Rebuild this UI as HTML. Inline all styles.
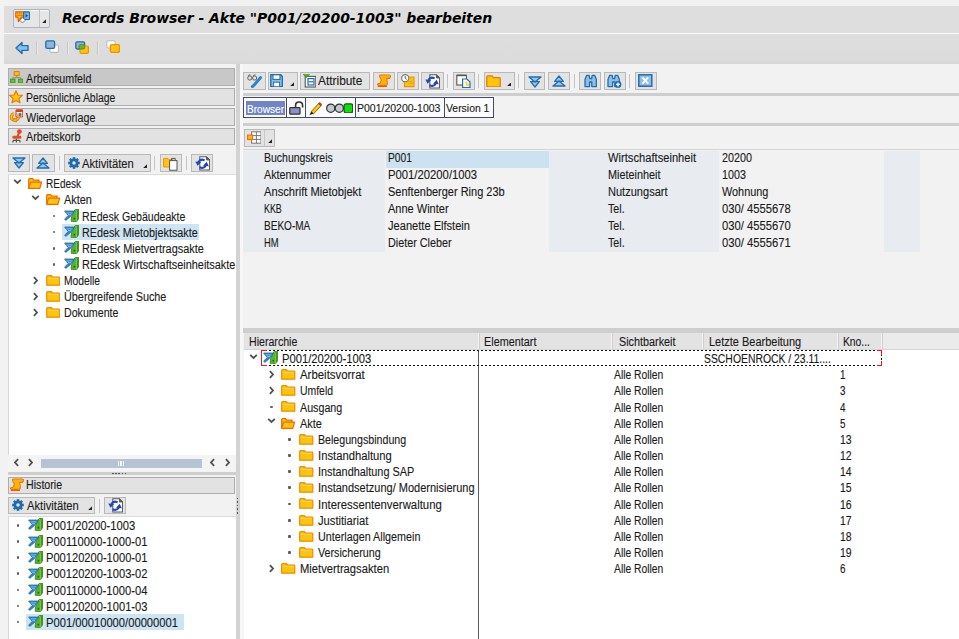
<!DOCTYPE html>
<html lang="de"><head><meta charset="utf-8"><title>Records Browser</title>
<style>
html,body{margin:0;padding:0}
body{width:959px;height:639px;overflow:hidden;background:#f2f2f2;position:relative;font-family:"Liberation Sans", sans-serif;font-size:12px;color:#1a1a1a}
#r{position:absolute;left:0;top:0;width:959px;height:639px;overflow:hidden}
#r div{position:absolute;white-space:nowrap}
#r .b{background:#e3e3e3;border:1px solid #b9b9b9;box-sizing:border-box}
#r .t{transform-origin:0 50%;-webkit-text-stroke:0.12px}
#r .i{line-height:0}
#r .i svg{display:block}
#r .title{font-family:"DejaVu Sans","Liberation Sans",sans-serif;font-weight:bold;font-style:italic;font-size:14px;color:#000;letter-spacing:-0.06px}
</style></head>
<body><div id="r">
<div style="left:4px;top:6px;width:955px;height:27px;background:#dedede"></div>
<div style="left:4px;top:33px;width:955px;height:1px;background:#fbfbfb"></div>
<div style="left:4px;top:34px;width:955px;height:30px;background:linear-gradient(#dedede 0,#dcdcdc 80%,#d6d6d6 100%)"></div>
<div style="left:13.4px;top:9.2px;width:36.2px;height:18.6px;background:#e6e6e6;border:1px solid #a9b4c4;border-radius:2px;box-sizing:border-box;box-shadow:inset 0 1px 0 #fafafa"></div>
<div style="left:39px;top:10.4px;width:1px;height:16.2px;background:#c4c4c4"></div>
<div class="i" style="left:15px;top:11.4px"><svg width="15.4" height="12.6" viewBox="0 0 15.4 12.6" style=""><path d="M0.8 0.8 H9.4 V6.2 H6.4 L3.4 10.6 L3 6.2 H0.8 Z" fill="#ffc40c" stroke="#ee5a00" stroke-width="1.2" stroke-linejoin="round"/><path d="M2.6 1.6 V3.4 M4.6 1.6 V3.4 M6.6 1.6 V3.4 M2 4.4 H8" stroke="#ee6a00" stroke-width="0.9"/><rect x="8.6" y="0.9" width="6" height="7.6" rx="1" fill="#7fb4e0" stroke="#1f6fb0" stroke-width="1.2"/><path d="M10.6 2.8 L13 4.7 L10.6 6.6 Z" fill="#1650a0"/><rect x="5.6" y="7.4" width="3.8" height="3.8" fill="#fff" stroke="#777" stroke-width="0.9" transform="rotate(45 7.5 9.3)"/></svg></div>
<div class="i" style="left:42.2px;top:19.2px"><svg width="4.2" height="4.2" viewBox="0 0 4.2 4.2" style=""><path d="M4.2 0 V4.2 H0 Z" fill="#222"/></svg></div>
<div class="title" style="left:62px;top:6px;height:24px;line-height:24px">Records Browser - Akte "P001/20200-1003" bearbeiten</div>
<div class="i" style="left:15px;top:41px"><svg width="14" height="14" viewBox="0 0 14 14" style=""><path d="M1 7 L7 1.4 V4.6 H13 V9.4 H7 V12.6 Z" fill="#8fbfe6" stroke="#1f6fb0" stroke-width="1.4" stroke-linejoin="round"/></svg></div>
<div style="left:36px;top:41px;width:1px;height:14px;background:#c6c6c6"></div>
<div style="left:37px;top:41px;width:1px;height:14px;background:#e9e9e9"></div>
<div class="i" style="left:45px;top:40px"><svg width="14" height="13" viewBox="0 0 14 13" style=""><rect x="5" y="5" width="8.4" height="7.4" rx="1.4" fill="#fff" stroke="#bbb" stroke-width="1.1"/><rect x="0.8" y="0.8" width="8.8" height="7.6" rx="1.4" fill="#8fb4de" stroke="#1f6fb0" stroke-width="1.3"/></svg></div>
<div style="left:67px;top:41px;width:1px;height:14px;background:#c6c6c6"></div>
<div style="left:68px;top:41px;width:1px;height:14px;background:#e9e9e9"></div>
<div class="i" style="left:75px;top:41px"><svg width="14" height="13" viewBox="0 0 14 13" style=""><rect x="0.8" y="0.8" width="8.8" height="7.2" rx="1.4" fill="#8fb4de" stroke="#1f6fb0" stroke-width="1.3"/><rect x="5" y="5" width="8.4" height="7.4" rx="1.4" fill="#ffc40c" stroke="#f29100" stroke-width="1.2"/><rect x="4" y="3.8" width="5.6" height="4.2" rx="0.8" fill="#6fb52c" stroke="#3f8f1a" stroke-width="0.9"/></svg></div>
<div style="left:97px;top:41px;width:1px;height:14px;background:#c6c6c6"></div>
<div style="left:98px;top:41px;width:1px;height:14px;background:#e9e9e9"></div>
<div class="i" style="left:106px;top:40px"><svg width="14" height="13" viewBox="0 0 14 13" style=""><rect x="0.8" y="0.8" width="8.4" height="7.2" rx="1.4" fill="#fff" stroke="#bbb" stroke-width="1.1"/><rect x="4.4" y="4.6" width="9" height="7.8" rx="1.4" fill="#ffc40c" stroke="#f29100" stroke-width="1.3"/></svg></div>
<div style="left:236px;top:63.5px;width:3.9px;height:576px;background:#d3d3d3"></div>
<div style="left:239.9px;top:64px;width:3.3px;height:575px;background:#f7f7f7"></div>
<div style="left:8px;top:68px;width:226.5px;height:17.5px;background:#c8c8c8;border:1px solid #adadad;box-sizing:border-box"></div>
<div class="i" style="left:10px;top:71px"><svg width="13.4" height="12.4" viewBox="0 0 14 13" style=""><rect x="4.4" y="0.6" width="5.2" height="4" fill="#ffc40c" stroke="#ee7a00" stroke-width="1.1"/><path d="M7 4.6 V7 M2.8 9 V7 H11.2 V9" fill="none" stroke="#888" stroke-width="1"/><rect x="0.6" y="8.6" width="4.6" height="3.8" fill="#6fc02c" stroke="#3f9f1a" stroke-width="1.1"/><rect x="8.8" y="8.6" width="4.6" height="3.8" fill="#6fc02c" stroke="#3f9f1a" stroke-width="1.1"/></svg></div>
<div class="t" style="left:25.5px;top:71.0px;height:17.5px;line-height:17.5px;transform:scaleX(0.8913);">Arbeitsumfeld</div>
<div style="left:8px;top:88px;width:226.5px;height:17.5px;background:#e2e2e2;border:1px solid #adadad;box-sizing:border-box"></div>
<div class="i" style="left:9px;top:90px"><svg width="14" height="14" viewBox="0 0 14 14" style=""><path d="M7 0.8 L8.9 5 L13.4 5.4 L10 8.4 L11 12.8 L7 10.4 L3 12.8 L4 8.4 L0.6 5.4 L5.1 5 Z" fill="#ffc40c" stroke="#ee7a00" stroke-width="1.2" stroke-linejoin="round"/></svg></div>
<div class="t" style="left:25.5px;top:89.5px;height:17.5px;line-height:17.5px;transform:scaleX(0.8701);">Persönliche Ablage</div>
<div style="left:8px;top:108px;width:226.5px;height:17.5px;background:#e2e2e2;border:1px solid #adadad;box-sizing:border-box"></div>
<div class="i" style="left:8.6px;top:109.4px"><svg width="14.4" height="13.6" viewBox="0 0 14.4 13.6" style=""><path d="M9.4 8.4 Q8.6 11.4 5.4 11.2 Q2 10.8 2.4 7.6 Q2.8 5.4 5 4.6" fill="none" stroke="#e07800" stroke-width="3.2"/><path d="M9.4 8.4 Q8.6 11.4 5.4 11.2 Q2 10.8 2.4 7.6 Q2.8 5.4 5 4.6" fill="none" stroke="#ffc40c" stroke-width="1.6"/><path d="M3 11.4 L7.4 13 L7 9.2 Z" fill="#ffc40c" stroke="#e07800" stroke-width="0.8"/><rect x="7" y="0.8" width="6.8" height="7.2" rx="1" fill="#fff" stroke="#d8401a" stroke-width="1.1"/><rect x="7" y="0.8" width="6.8" height="2.2" fill="#d8401a"/><path d="M9 4.2 V7 M10.6 4.2 H12 V7 H10.6 Z M10.6 5.6 H12" stroke="#444" stroke-width="0.8" fill="none"/></svg></div>
<div class="t" style="left:25.5px;top:109.5px;height:17.5px;line-height:17.5px;transform:scaleX(0.8969);">Wiedervorlage</div>
<div style="left:8px;top:127.5px;width:226.5px;height:17.5px;background:#e2e2e2;border:1px solid #adadad;box-sizing:border-box"></div>
<div class="i" style="left:9.6px;top:129.1px"><svg width="12.4" height="14" viewBox="0 0 12.4 14" style=""><circle cx="9.4" cy="2.6" r="2.4" fill="#e4481c"/><path d="M8.8 4.4 L7.6 7.4" stroke="#e4481c" stroke-width="2"/><rect x="2.4" y="6.8" width="9" height="3" rx="1.2" fill="#e0501a"/><path d="M6.4 9.8 V11.6 M3 13.6 V12.2 Q3 11.4 4 11.4 H9 Q10 11.4 10 12.2 V13.6 M6.4 11.6 V13.6" fill="none" stroke="#555" stroke-width="1.2"/></svg></div>
<div class="t" style="left:25.5px;top:129.0px;height:17.5px;line-height:17.5px;transform:scaleX(0.8962);">Arbeitskorb</div>
<div class="b" style="left:8.4px;top:154px;width:22px;height:18px;"></div>
<div class="i" style="left:12.4px;top:157.2px"><svg width="14" height="12" viewBox="0 0 14 12" style=""><path d="M2.6 5.6 H11.4 L7 11 Z" fill="#9cc4e6" stroke="#1f6fb0" stroke-width="1.3" stroke-linejoin="round"/><path d="M1 1 H13 L7 6 Z" fill="#9cc4e6" stroke="#1f6fb0" stroke-width="1.3" stroke-linejoin="round"/></svg></div>
<div class="b" style="left:32.4px;top:154px;width:22.2px;height:18px;"></div>
<div class="i" style="left:36.4px;top:157.2px"><svg width="14" height="12" viewBox="0 0 14 12" style=""><path d="M2.6 6.4 H11.4 L7 1 Z" fill="#9cc4e6" stroke="#1f6fb0" stroke-width="1.3" stroke-linejoin="round"/><path d="M1 11 H13 L7 6 Z" fill="#9cc4e6" stroke="#1f6fb0" stroke-width="1.3" stroke-linejoin="round"/></svg></div>
<div style="left:58.5px;top:156px;width:1px;height:14px;background:#c4c4c4"></div>
<div class="b" style="left:64px;top:154px;width:87px;height:18px;"></div>
<div class="i" style="left:67.6px;top:157px"><svg width="12" height="12" viewBox="0 0 13 13" style=""><rect x="5.1" y="0.2" width="2.8" height="3" fill="#1c6cb2" transform="rotate(0 6.5 6.5)"/><rect x="5.1" y="0.2" width="2.8" height="3" fill="#1c6cb2" transform="rotate(45 6.5 6.5)"/><rect x="5.1" y="0.2" width="2.8" height="3" fill="#1c6cb2" transform="rotate(90 6.5 6.5)"/><rect x="5.1" y="0.2" width="2.8" height="3" fill="#1c6cb2" transform="rotate(135 6.5 6.5)"/><rect x="5.1" y="0.2" width="2.8" height="3" fill="#1c6cb2" transform="rotate(180 6.5 6.5)"/><rect x="5.1" y="0.2" width="2.8" height="3" fill="#1c6cb2" transform="rotate(225 6.5 6.5)"/><rect x="5.1" y="0.2" width="2.8" height="3" fill="#1c6cb2" transform="rotate(270 6.5 6.5)"/><rect x="5.1" y="0.2" width="2.8" height="3" fill="#1c6cb2" transform="rotate(315 6.5 6.5)"/><circle cx="6.5" cy="6.5" r="4.8" fill="#1c6cb2"/><circle cx="6.5" cy="6.5" r="1.9" fill="#e8e8e8"/></svg></div>
<div class="t" style="left:82px;top:155.0px;height:18px;line-height:18px;transform:scaleX(0.9348);">Aktivitäten</div>
<div class="i" style="left:143.3px;top:164.2px"><svg width="4.2" height="4.2" viewBox="0 0 4.2 4.2" style=""><path d="M4.2 0 V4.2 H0 Z" fill="#222"/></svg></div>
<div style="left:154px;top:156px;width:1px;height:14px;background:#c4c4c4"></div>
<div class="b" style="left:160px;top:154px;width:21.5px;height:18px;"></div>
<div class="i" style="left:163px;top:155.5px"><svg width="15" height="15" viewBox="0 0 15 15" style=""><path d="M0.6 2.4 H5 L6 3.6 H10 V11 H0.6 Z" fill="#ffc40c" stroke="#f29100" stroke-width="1"/><rect x="6.6" y="4.6" width="7.4" height="9.6" fill="#fff" stroke="#555" stroke-width="1"/><path d="M8.4 4.4 V2.4 H12.2 V4.4" fill="none" stroke="#555" stroke-width="1"/></svg></div>
<div style="left:186px;top:156px;width:1px;height:14px;background:#c4c4c4"></div>
<div class="b" style="left:191px;top:154px;width:22px;height:18px;"></div>
<div class="i" style="left:194.5px;top:155.5px"><svg width="15.4" height="15" viewBox="0 0 15.4 15" style=""><path d="M4.8 0.8 H11.4 L14.6 4 V14 H4.8 Z" fill="#fff" stroke="#5a5a5a" stroke-width="1.1"/><path d="M11.4 0.8 V4 H14.6 Z" fill="#555" stroke="#555" stroke-width="0.8"/><path d="M9.6 4.4 Q5.4 2.4 3.4 6.2" fill="none" stroke="#1d46c0" stroke-width="2.1"/><path d="M0.4 5.4 L6.2 5.9 L2.5 9.8 Z" fill="#1d46c0"/><path d="M4.6 11.2 Q8.8 13.2 10.8 9.4" fill="none" stroke="#1d46c0" stroke-width="2.1"/><path d="M13.8 10.2 L8 9.7 L11.7 5.8 Z" fill="#1d46c0"/></svg></div>
<div style="left:8px;top:174px;width:228px;height:281px;background:#fff;border-left:1px solid #d8d8d8;border-top:1px solid #dcdcdc;box-sizing:border-box"></div>
<div class="i" style="left:13.100000000000001px;top:178.79999999999998px"><svg width="9" height="6" viewBox="0 0 9 6" style=""><path d="M1.2 0.9 L4.5 4 L7.8 0.9" fill="none" stroke="#505050" stroke-width="1.8"/></svg></div>
<div class="i" style="left:27.6px;top:178.0px"><svg width="14.5" height="11" viewBox="0 0 14.5 11" style=""><path d="M0.7 10.2 V1.5 Q0.7 0.7 1.5 0.7 H4.6 L5.8 2.2 H11 V4" fill="#ffc40c" stroke="#ee6a00" stroke-width="1.2"/><path d="M0.7 10.4 L2.6 4.1 H13.6 L11.8 10.4 Z" fill="#ffc40c" stroke="#ee6a00" stroke-width="1.2" stroke-linejoin="round"/></svg></div>
<div class="t" style="left:45.900000000000006px;top:176.2px;height:16.15px;line-height:16.15px;transform:scaleX(0.8348);">REdesk</div>
<div class="i" style="left:31.299999999999997px;top:194.95px"><svg width="9" height="6" viewBox="0 0 9 6" style=""><path d="M1.2 0.9 L4.5 4 L7.8 0.9" fill="none" stroke="#505050" stroke-width="1.8"/></svg></div>
<div class="i" style="left:45.8px;top:194.15px"><svg width="14.5" height="11" viewBox="0 0 14.5 11" style=""><path d="M0.7 10.2 V1.5 Q0.7 0.7 1.5 0.7 H4.6 L5.8 2.2 H11 V4" fill="#ffc40c" stroke="#ee6a00" stroke-width="1.2"/><path d="M0.7 10.4 L2.6 4.1 H13.6 L11.8 10.4 Z" fill="#ffc40c" stroke="#ee6a00" stroke-width="1.2" stroke-linejoin="round"/></svg></div>
<div class="t" style="left:64.1px;top:192.35px;height:16.15px;line-height:16.15px;transform:scaleX(0.9107);">Akten</div>
<div style="left:52.6px;top:214.5px;width:2.8px;height:2.8px;background:#606060;border-radius:0.9px"></div>
<div class="i" style="left:63.6px;top:208.8px"><svg width="15" height="13" viewBox="0 0 15 13" style=""><path d="M7.1 12.3 L7.6 7.6 L10.9 0.8 L14.5 0.2 L14.5 9.8 L12.6 12.5 Z" fill="#58b42c" stroke="#3a8c1c" stroke-width="0.9" stroke-linejoin="round"/><path d="M12.6 12.5 L12.6 2.6 L14.5 0.2 L14.5 9.8 Z" fill="#3a9420"/><path d="M10.9 0.8 L12.6 2.6 L12.6 12.5" fill="none" stroke="#8ed860" stroke-width="0.7"/><rect x="9.6" y="8.8" width="1.5" height="1.7" fill="#1f5d12"/><path d="M0.6 2 H10.6 L6.4 7.6 L1.8 11.4 L0.6 10.2 L4.2 6.4 Z" fill="#2f83c2" stroke="#1f6fb0" stroke-width="0.8" stroke-linejoin="round"/><path d="M2.6 3.9 H8.4 M4 5.7 H7" stroke="#9fd0f0" stroke-width="0.8"/></svg></div>
<div class="t" style="left:82.3px;top:208.5px;height:16.15px;line-height:16.15px;transform:scaleX(0.8808);">REdesk Gebäudeakte</div>
<div style="left:62.0px;top:224.04999999999998px;width:137px;height:15.549999999999999px;background:#cde4f3"></div>
<div style="left:52.6px;top:230.64999999999998px;width:2.8px;height:2.8px;background:#606060;border-radius:0.9px"></div>
<div class="i" style="left:63.6px;top:224.95px"><svg width="15" height="13" viewBox="0 0 15 13" style=""><path d="M7.1 12.3 L7.6 7.6 L10.9 0.8 L14.5 0.2 L14.5 9.8 L12.6 12.5 Z" fill="#58b42c" stroke="#3a8c1c" stroke-width="0.9" stroke-linejoin="round"/><path d="M12.6 12.5 L12.6 2.6 L14.5 0.2 L14.5 9.8 Z" fill="#3a9420"/><path d="M10.9 0.8 L12.6 2.6 L12.6 12.5" fill="none" stroke="#8ed860" stroke-width="0.7"/><rect x="9.6" y="8.8" width="1.5" height="1.7" fill="#1f5d12"/><path d="M0.6 2 H10.6 L6.4 7.6 L1.8 11.4 L0.6 10.2 L4.2 6.4 Z" fill="#2f83c2" stroke="#1f6fb0" stroke-width="0.8" stroke-linejoin="round"/><path d="M2.6 3.9 H8.4 M4 5.7 H7" stroke="#9fd0f0" stroke-width="0.8"/></svg></div>
<div class="t" style="left:82.3px;top:224.65px;height:16.15px;line-height:16.15px;transform:scaleX(0.8985);">REdesk Mietobjektsakte</div>
<div style="left:52.6px;top:246.79999999999998px;width:2.8px;height:2.8px;background:#606060;border-radius:0.9px"></div>
<div class="i" style="left:63.6px;top:241.1px"><svg width="15" height="13" viewBox="0 0 15 13" style=""><path d="M7.1 12.3 L7.6 7.6 L10.9 0.8 L14.5 0.2 L14.5 9.8 L12.6 12.5 Z" fill="#58b42c" stroke="#3a8c1c" stroke-width="0.9" stroke-linejoin="round"/><path d="M12.6 12.5 L12.6 2.6 L14.5 0.2 L14.5 9.8 Z" fill="#3a9420"/><path d="M10.9 0.8 L12.6 2.6 L12.6 12.5" fill="none" stroke="#8ed860" stroke-width="0.7"/><rect x="9.6" y="8.8" width="1.5" height="1.7" fill="#1f5d12"/><path d="M0.6 2 H10.6 L6.4 7.6 L1.8 11.4 L0.6 10.2 L4.2 6.4 Z" fill="#2f83c2" stroke="#1f6fb0" stroke-width="0.8" stroke-linejoin="round"/><path d="M2.6 3.9 H8.4 M4 5.7 H7" stroke="#9fd0f0" stroke-width="0.8"/></svg></div>
<div class="t" style="left:82.3px;top:240.8px;height:16.15px;line-height:16.15px;transform:scaleX(0.9084);">REdesk Mietvertragsakte</div>
<div style="left:52.6px;top:262.95px;width:2.8px;height:2.8px;background:#606060;border-radius:0.9px"></div>
<div class="i" style="left:63.6px;top:257.25px"><svg width="15" height="13" viewBox="0 0 15 13" style=""><path d="M7.1 12.3 L7.6 7.6 L10.9 0.8 L14.5 0.2 L14.5 9.8 L12.6 12.5 Z" fill="#58b42c" stroke="#3a8c1c" stroke-width="0.9" stroke-linejoin="round"/><path d="M12.6 12.5 L12.6 2.6 L14.5 0.2 L14.5 9.8 Z" fill="#3a9420"/><path d="M10.9 0.8 L12.6 2.6 L12.6 12.5" fill="none" stroke="#8ed860" stroke-width="0.7"/><rect x="9.6" y="8.8" width="1.5" height="1.7" fill="#1f5d12"/><path d="M0.6 2 H10.6 L6.4 7.6 L1.8 11.4 L0.6 10.2 L4.2 6.4 Z" fill="#2f83c2" stroke="#1f6fb0" stroke-width="0.8" stroke-linejoin="round"/><path d="M2.6 3.9 H8.4 M4 5.7 H7" stroke="#9fd0f0" stroke-width="0.8"/></svg></div>
<div class="t" style="left:82.3px;top:256.95px;height:16.15px;line-height:16.15px;transform:scaleX(0.9092);">REdesk Wirtschaftseinheitsakte</div>
<div class="i" style="left:33.3px;top:275.49999999999994px"><svg width="6" height="9" viewBox="0 0 6 9" style=""><path d="M0.9 1.2 L4 4.5 L0.9 7.8" fill="none" stroke="#505050" stroke-width="1.8"/></svg></div>
<div class="i" style="left:45.8px;top:274.9px"><svg width="14.5" height="11" viewBox="0 0 14.5 11" style=""><path d="M0.7 1.8 Q0.7 0.7 1.8 0.7 H5.4 L6.6 2.2 H13 Q13.8 2.2 13.8 3 V10.2 H0.7 Z" fill="#ffc40c" stroke="#f08a00" stroke-width="1.2"/><path d="M1.6 3.3 H12.8" stroke="#ffdc5e" stroke-width="0.9"/></svg></div>
<div class="t" style="left:64.1px;top:273.1px;height:16.15px;line-height:16.15px;transform:scaleX(0.8591);">Modelle</div>
<div class="i" style="left:33.3px;top:291.65px"><svg width="6" height="9" viewBox="0 0 6 9" style=""><path d="M0.9 1.2 L4 4.5 L0.9 7.8" fill="none" stroke="#505050" stroke-width="1.8"/></svg></div>
<div class="i" style="left:45.8px;top:291.05px"><svg width="14.5" height="11" viewBox="0 0 14.5 11" style=""><path d="M0.7 1.8 Q0.7 0.7 1.8 0.7 H5.4 L6.6 2.2 H13 Q13.8 2.2 13.8 3 V10.2 H0.7 Z" fill="#ffc40c" stroke="#f08a00" stroke-width="1.2"/><path d="M1.6 3.3 H12.8" stroke="#ffdc5e" stroke-width="0.9"/></svg></div>
<div class="t" style="left:64.1px;top:289.25px;height:16.15px;line-height:16.15px;transform:scaleX(0.9029);">Übergreifende Suche</div>
<div class="i" style="left:33.3px;top:307.79999999999995px"><svg width="6" height="9" viewBox="0 0 6 9" style=""><path d="M0.9 1.2 L4 4.5 L0.9 7.8" fill="none" stroke="#505050" stroke-width="1.8"/></svg></div>
<div class="i" style="left:45.8px;top:307.2px"><svg width="14.5" height="11" viewBox="0 0 14.5 11" style=""><path d="M0.7 1.8 Q0.7 0.7 1.8 0.7 H5.4 L6.6 2.2 H13 Q13.8 2.2 13.8 3 V10.2 H0.7 Z" fill="#ffc40c" stroke="#f08a00" stroke-width="1.2"/><path d="M1.6 3.3 H12.8" stroke="#ffdc5e" stroke-width="0.9"/></svg></div>
<div class="t" style="left:64.1px;top:305.4px;height:16.15px;line-height:16.15px;transform:scaleX(0.8875);">Dokumente</div>
<div style="left:8px;top:455px;width:227px;height:16px;background:#f4f4f4"></div>
<div class="i" style="left:12.5px;top:458px"><svg width="6" height="9" viewBox="0 0 6 9" style=""><path d="M5.1 1.2 L2 4.5 L5.1 7.8" fill="none" stroke="#505050" stroke-width="1.8"/></svg></div>
<div class="i" style="left:28px;top:458px"><svg width="6" height="9" viewBox="0 0 6 9" style=""><path d="M0.9 1.2 L4 4.5 L0.9 7.8" fill="none" stroke="#505050" stroke-width="1.8"/></svg></div>
<div style="left:40.5px;top:459px;width:161.5px;height:8.5px;background:#b5c3d3"></div>
<div style="left:117.6px;top:460.6px;width:1.4px;height:5px;background:#f4f7fa"></div>
<div style="left:120.19999999999999px;top:460.6px;width:1.4px;height:5px;background:#f4f7fa"></div>
<div style="left:122.8px;top:460.6px;width:1.4px;height:5px;background:#f4f7fa"></div>
<div class="i" style="left:208.5px;top:458px"><svg width="6" height="9" viewBox="0 0 6 9" style=""><path d="M5.1 1.2 L2 4.5 L5.1 7.8" fill="none" stroke="#505050" stroke-width="1.8"/></svg></div>
<div class="i" style="left:224.5px;top:458px"><svg width="6" height="9" viewBox="0 0 6 9" style=""><path d="M0.9 1.2 L4 4.5 L0.9 7.8" fill="none" stroke="#505050" stroke-width="1.8"/></svg></div>
<div style="left:8px;top:471.8px;width:227.5px;height:3.4px;background:#cecece"></div>
<div style="left:112.0px;top:472.5px;width:1.5px;height:1.5px;background:#555"></div>
<div style="left:115.2px;top:472.5px;width:1.5px;height:1.5px;background:#555"></div>
<div style="left:118.4px;top:472.5px;width:1.5px;height:1.5px;background:#555"></div>
<div style="left:121.6px;top:472.5px;width:1.5px;height:1.5px;background:#555"></div>
<div style="left:124.8px;top:472.5px;width:1.5px;height:1.5px;background:#555"></div>
<div style="left:8px;top:476.5px;width:226.5px;height:17px;background:#e2e2e2;border:1px solid #adadad;box-sizing:border-box"></div>
<div class="i" style="left:9.5px;top:478px"><svg width="14.5" height="13.5" viewBox="0 0 14.5 13.5" style=""><path d="M3 1 H12 Q14 1 13.4 3 L12.4 4.4 H9.6 L10.4 9 Q10.6 11 8.8 11.4 H1.4 Q0.2 11.2 0.8 9.8 L3 9.4 L4.4 6 L3.2 4 Q2 2 3 1 Z" fill="#ffb40c" stroke="#ee7a00" stroke-width="1.1" stroke-linejoin="round"/><path d="M0.8 12.4 H10" stroke="#ee5a00" stroke-width="1.2"/></svg></div>
<div class="t" style="left:25.5px;top:477.0px;height:17px;line-height:17px;transform:scaleX(0.8874);">Historie</div>
<div class="b" style="left:8px;top:496.5px;width:86.5px;height:17.5px;"></div>
<div class="i" style="left:11.5px;top:499.3px"><svg width="12" height="12" viewBox="0 0 13 13" style=""><rect x="5.1" y="0.2" width="2.8" height="3" fill="#1c6cb2" transform="rotate(0 6.5 6.5)"/><rect x="5.1" y="0.2" width="2.8" height="3" fill="#1c6cb2" transform="rotate(45 6.5 6.5)"/><rect x="5.1" y="0.2" width="2.8" height="3" fill="#1c6cb2" transform="rotate(90 6.5 6.5)"/><rect x="5.1" y="0.2" width="2.8" height="3" fill="#1c6cb2" transform="rotate(135 6.5 6.5)"/><rect x="5.1" y="0.2" width="2.8" height="3" fill="#1c6cb2" transform="rotate(180 6.5 6.5)"/><rect x="5.1" y="0.2" width="2.8" height="3" fill="#1c6cb2" transform="rotate(225 6.5 6.5)"/><rect x="5.1" y="0.2" width="2.8" height="3" fill="#1c6cb2" transform="rotate(270 6.5 6.5)"/><rect x="5.1" y="0.2" width="2.8" height="3" fill="#1c6cb2" transform="rotate(315 6.5 6.5)"/><circle cx="6.5" cy="6.5" r="4.8" fill="#1c6cb2"/><circle cx="6.5" cy="6.5" r="1.9" fill="#e8e8e8"/></svg></div>
<div class="t" style="left:26.5px;top:497.5px;height:17.5px;line-height:17.5px;transform:scaleX(0.9348);">Aktivitäten</div>
<div class="i" style="left:88.1px;top:506.3px"><svg width="4.2" height="4.2" viewBox="0 0 4.2 4.2" style=""><path d="M4.2 0 V4.2 H0 Z" fill="#222"/></svg></div>
<div style="left:99px;top:498.5px;width:1px;height:14px;background:#c4c4c4"></div>
<div class="b" style="left:104px;top:496.5px;width:22px;height:17.5px;"></div>
<div class="i" style="left:107.5px;top:497.8px"><svg width="15.4" height="15" viewBox="0 0 15.4 15" style=""><path d="M4.8 0.8 H11.4 L14.6 4 V14 H4.8 Z" fill="#fff" stroke="#5a5a5a" stroke-width="1.1"/><path d="M11.4 0.8 V4 H14.6 Z" fill="#555" stroke="#555" stroke-width="0.8"/><path d="M9.6 4.4 Q5.4 2.4 3.4 6.2" fill="none" stroke="#1d46c0" stroke-width="2.1"/><path d="M0.4 5.4 L6.2 5.9 L2.5 9.8 Z" fill="#1d46c0"/><path d="M4.6 11.2 Q8.8 13.2 10.8 9.4" fill="none" stroke="#1d46c0" stroke-width="2.1"/><path d="M13.8 10.2 L8 9.7 L11.7 5.8 Z" fill="#1d46c0"/></svg></div>
<div style="left:236.6px;top:497.5px;width:1.6px;height:1.8px;background:#555"></div>
<div style="left:236.6px;top:501.1px;width:1.6px;height:1.8px;background:#555"></div>
<div style="left:236.6px;top:504.7px;width:1.6px;height:1.8px;background:#555"></div>
<div style="left:236.6px;top:508.3px;width:1.6px;height:1.8px;background:#555"></div>
<div style="left:236.6px;top:511.9px;width:1.6px;height:1.8px;background:#555"></div>
<div style="left:8px;top:515.5px;width:228px;height:124px;background:#fff;border-left:1px solid #d8d8d8;border-top:1px solid #dcdcdc;box-sizing:border-box"></div>
<div style="left:16.6px;top:524.1px;width:2.8px;height:2.8px;background:#606060;border-radius:0.9px"></div>
<div class="i" style="left:27.6px;top:518.4px"><svg width="15" height="13" viewBox="0 0 15 13" style=""><path d="M7.1 12.3 L7.6 7.6 L10.9 0.8 L14.5 0.2 L14.5 9.8 L12.6 12.5 Z" fill="#58b42c" stroke="#3a8c1c" stroke-width="0.9" stroke-linejoin="round"/><path d="M12.6 12.5 L12.6 2.6 L14.5 0.2 L14.5 9.8 Z" fill="#3a9420"/><path d="M10.9 0.8 L12.6 2.6 L12.6 12.5" fill="none" stroke="#8ed860" stroke-width="0.7"/><rect x="9.6" y="8.8" width="1.5" height="1.7" fill="#1f5d12"/><path d="M0.6 2 H10.6 L6.4 7.6 L1.8 11.4 L0.6 10.2 L4.2 6.4 Z" fill="#2f83c2" stroke="#1f6fb0" stroke-width="0.8" stroke-linejoin="round"/><path d="M2.6 3.9 H8.4 M4 5.7 H7" stroke="#9fd0f0" stroke-width="0.8"/></svg></div>
<div class="t" style="left:46.3px;top:518.1px;height:16.15px;line-height:16.15px;transform:scaleX(0.9343);">P001/20200-1003</div>
<div style="left:16.6px;top:540.2px;width:2.8px;height:2.8px;background:#606060;border-radius:0.9px"></div>
<div class="i" style="left:27.6px;top:534.5px"><svg width="15" height="13" viewBox="0 0 15 13" style=""><path d="M7.1 12.3 L7.6 7.6 L10.9 0.8 L14.5 0.2 L14.5 9.8 L12.6 12.5 Z" fill="#58b42c" stroke="#3a8c1c" stroke-width="0.9" stroke-linejoin="round"/><path d="M12.6 12.5 L12.6 2.6 L14.5 0.2 L14.5 9.8 Z" fill="#3a9420"/><path d="M10.9 0.8 L12.6 2.6 L12.6 12.5" fill="none" stroke="#8ed860" stroke-width="0.7"/><rect x="9.6" y="8.8" width="1.5" height="1.7" fill="#1f5d12"/><path d="M0.6 2 H10.6 L6.4 7.6 L1.8 11.4 L0.6 10.2 L4.2 6.4 Z" fill="#2f83c2" stroke="#1f6fb0" stroke-width="0.8" stroke-linejoin="round"/><path d="M2.6 3.9 H8.4 M4 5.7 H7" stroke="#9fd0f0" stroke-width="0.8"/></svg></div>
<div class="t" style="left:46.3px;top:534.2px;height:16.15px;line-height:16.15px;transform:scaleX(0.9340);">P00110000-1000-01</div>
<div style="left:16.6px;top:556.3000000000001px;width:2.8px;height:2.8px;background:#606060;border-radius:0.9px"></div>
<div class="i" style="left:27.6px;top:550.6px"><svg width="15" height="13" viewBox="0 0 15 13" style=""><path d="M7.1 12.3 L7.6 7.6 L10.9 0.8 L14.5 0.2 L14.5 9.8 L12.6 12.5 Z" fill="#58b42c" stroke="#3a8c1c" stroke-width="0.9" stroke-linejoin="round"/><path d="M12.6 12.5 L12.6 2.6 L14.5 0.2 L14.5 9.8 Z" fill="#3a9420"/><path d="M10.9 0.8 L12.6 2.6 L12.6 12.5" fill="none" stroke="#8ed860" stroke-width="0.7"/><rect x="9.6" y="8.8" width="1.5" height="1.7" fill="#1f5d12"/><path d="M0.6 2 H10.6 L6.4 7.6 L1.8 11.4 L0.6 10.2 L4.2 6.4 Z" fill="#2f83c2" stroke="#1f6fb0" stroke-width="0.8" stroke-linejoin="round"/><path d="M2.6 3.9 H8.4 M4 5.7 H7" stroke="#9fd0f0" stroke-width="0.8"/></svg></div>
<div class="t" style="left:46.3px;top:550.3px;height:16.15px;line-height:16.15px;transform:scaleX(0.9264);">P00120200-1000-01</div>
<div style="left:16.6px;top:572.4px;width:2.8px;height:2.8px;background:#606060;border-radius:0.9px"></div>
<div class="i" style="left:27.6px;top:566.6999999999999px"><svg width="15" height="13" viewBox="0 0 15 13" style=""><path d="M7.1 12.3 L7.6 7.6 L10.9 0.8 L14.5 0.2 L14.5 9.8 L12.6 12.5 Z" fill="#58b42c" stroke="#3a8c1c" stroke-width="0.9" stroke-linejoin="round"/><path d="M12.6 12.5 L12.6 2.6 L14.5 0.2 L14.5 9.8 Z" fill="#3a9420"/><path d="M10.9 0.8 L12.6 2.6 L12.6 12.5" fill="none" stroke="#8ed860" stroke-width="0.7"/><rect x="9.6" y="8.8" width="1.5" height="1.7" fill="#1f5d12"/><path d="M0.6 2 H10.6 L6.4 7.6 L1.8 11.4 L0.6 10.2 L4.2 6.4 Z" fill="#2f83c2" stroke="#1f6fb0" stroke-width="0.8" stroke-linejoin="round"/><path d="M2.6 3.9 H8.4 M4 5.7 H7" stroke="#9fd0f0" stroke-width="0.8"/></svg></div>
<div class="t" style="left:46.3px;top:566.4px;height:16.15px;line-height:16.15px;transform:scaleX(0.9264);">P00120200-1003-02</div>
<div style="left:16.6px;top:588.5px;width:2.8px;height:2.8px;background:#606060;border-radius:0.9px"></div>
<div class="i" style="left:27.6px;top:582.8px"><svg width="15" height="13" viewBox="0 0 15 13" style=""><path d="M7.1 12.3 L7.6 7.6 L10.9 0.8 L14.5 0.2 L14.5 9.8 L12.6 12.5 Z" fill="#58b42c" stroke="#3a8c1c" stroke-width="0.9" stroke-linejoin="round"/><path d="M12.6 12.5 L12.6 2.6 L14.5 0.2 L14.5 9.8 Z" fill="#3a9420"/><path d="M10.9 0.8 L12.6 2.6 L12.6 12.5" fill="none" stroke="#8ed860" stroke-width="0.7"/><rect x="9.6" y="8.8" width="1.5" height="1.7" fill="#1f5d12"/><path d="M0.6 2 H10.6 L6.4 7.6 L1.8 11.4 L0.6 10.2 L4.2 6.4 Z" fill="#2f83c2" stroke="#1f6fb0" stroke-width="0.8" stroke-linejoin="round"/><path d="M2.6 3.9 H8.4 M4 5.7 H7" stroke="#9fd0f0" stroke-width="0.8"/></svg></div>
<div class="t" style="left:46.3px;top:582.5px;height:16.15px;line-height:16.15px;transform:scaleX(0.9340);">P00110000-1000-04</div>
<div style="left:16.6px;top:604.6px;width:2.8px;height:2.8px;background:#606060;border-radius:0.9px"></div>
<div class="i" style="left:27.6px;top:598.9px"><svg width="15" height="13" viewBox="0 0 15 13" style=""><path d="M7.1 12.3 L7.6 7.6 L10.9 0.8 L14.5 0.2 L14.5 9.8 L12.6 12.5 Z" fill="#58b42c" stroke="#3a8c1c" stroke-width="0.9" stroke-linejoin="round"/><path d="M12.6 12.5 L12.6 2.6 L14.5 0.2 L14.5 9.8 Z" fill="#3a9420"/><path d="M10.9 0.8 L12.6 2.6 L12.6 12.5" fill="none" stroke="#8ed860" stroke-width="0.7"/><rect x="9.6" y="8.8" width="1.5" height="1.7" fill="#1f5d12"/><path d="M0.6 2 H10.6 L6.4 7.6 L1.8 11.4 L0.6 10.2 L4.2 6.4 Z" fill="#2f83c2" stroke="#1f6fb0" stroke-width="0.8" stroke-linejoin="round"/><path d="M2.6 3.9 H8.4 M4 5.7 H7" stroke="#9fd0f0" stroke-width="0.8"/></svg></div>
<div class="t" style="left:46.3px;top:598.6px;height:16.15px;line-height:16.15px;transform:scaleX(0.9264);">P00120200-1001-03</div>
<div style="left:26.0px;top:614.1px;width:158px;height:15.549999999999999px;background:#cde4f3"></div>
<div style="left:16.6px;top:620.7px;width:2.8px;height:2.8px;background:#606060;border-radius:0.9px"></div>
<div class="i" style="left:27.6px;top:615.0px"><svg width="15" height="13" viewBox="0 0 15 13" style=""><path d="M7.1 12.3 L7.6 7.6 L10.9 0.8 L14.5 0.2 L14.5 9.8 L12.6 12.5 Z" fill="#58b42c" stroke="#3a8c1c" stroke-width="0.9" stroke-linejoin="round"/><path d="M12.6 12.5 L12.6 2.6 L14.5 0.2 L14.5 9.8 Z" fill="#3a9420"/><path d="M10.9 0.8 L12.6 2.6 L12.6 12.5" fill="none" stroke="#8ed860" stroke-width="0.7"/><rect x="9.6" y="8.8" width="1.5" height="1.7" fill="#1f5d12"/><path d="M0.6 2 H10.6 L6.4 7.6 L1.8 11.4 L0.6 10.2 L4.2 6.4 Z" fill="#2f83c2" stroke="#1f6fb0" stroke-width="0.8" stroke-linejoin="round"/><path d="M2.6 3.9 H8.4 M4 5.7 H7" stroke="#9fd0f0" stroke-width="0.8"/></svg></div>
<div class="t" style="left:46.3px;top:614.7px;height:16.15px;line-height:16.15px;transform:scaleX(0.9329);">P001/00010000/00000001</div>
<div class="b" style="left:243.4px;top:72.3px;width:22.2px;height:17.4px;"></div>
<div class="i" style="left:247px;top:73.89999999999999px"><svg width="15" height="14" viewBox="0 0 15 14" style=""><circle cx="2.8" cy="4" r="2.1" fill="none" stroke="#555" stroke-width="0.9"/><circle cx="7.6" cy="4" r="2.1" fill="none" stroke="#555" stroke-width="0.9"/><path d="M1.2 2 Q2 0.4 3.4 0.8 M6 2 Q7 0.4 8.4 0.8" fill="none" stroke="#555" stroke-width="0.8"/><path d="M13.6 3.6 L7 11.2 L5.4 12.6" stroke="#2a86c8" stroke-width="3" fill="none" stroke-linecap="round"/></svg></div>
<div class="b" style="left:268px;top:72.3px;width:29.6px;height:17.4px;"></div>
<div class="i" style="left:269.6px;top:73.89999999999999px"><svg width="13.2" height="13.6" viewBox="0 0 13.2 13.6" style=""><path d="M0.8 0.8 H10.8 L12.4 2.4 V12.8 H0.8 Z" fill="#8fbfe6" stroke="#1f6fb0" stroke-width="1.4" stroke-linejoin="round"/><rect x="3" y="0.8" width="7" height="4.6" fill="#fff" stroke="#1f6fb0" stroke-width="1.1"/><rect x="3.6" y="8.2" width="6" height="4.6" fill="#fff" stroke="#1f6fb0" stroke-width="1"/></svg></div>
<div class="i" style="left:290px;top:81.8px"><svg width="4.2" height="4.2" viewBox="0 0 4.2 4.2" style=""><path d="M4.2 0 V4.2 H0 Z" fill="#222"/></svg></div>
<div class="b" style="left:300.4px;top:72.3px;width:69.8px;height:17.4px;"></div>
<div class="i" style="left:302.5px;top:73.89999999999999px"><svg width="13.6" height="13.8" viewBox="0 0 13.6 13.8" style=""><rect x="2.2" y="2.4" width="10.6" height="10.6" fill="#fff" stroke="#555" stroke-width="1.1"/><rect x="5" y="4.6" width="6" height="6.4" fill="#fff" stroke="#1f6fb0" stroke-width="1.2"/><path d="M5.6 7.8 H10.4" stroke="#1f6fb0" stroke-width="1.2"/><path d="M0.2 0.4 H6.6 L3.4 3.8 Z" fill="#4caf1f" stroke="#2f8f10" stroke-width="0.6"/></svg></div>
<div class="t" style="left:317.7px;top:73.3px;height:17.2px;line-height:17.2px;transform:scaleX(0.9910);">Attribute</div>
<div class="b" style="left:373px;top:72.3px;width:21.6px;height:17.4px;"></div>
<div class="i" style="left:376.5px;top:74.3px"><svg width="14.5" height="13.5" viewBox="0 0 14.5 13.5" style=""><path d="M3 1 H12 Q14 1 13.4 3 L12.4 4.4 H9.6 L10.4 9 Q10.6 11 8.8 11.4 H1.4 Q0.2 11.2 0.8 9.8 L3 9.4 L4.4 6 L3.2 4 Q2 2 3 1 Z" fill="#ffb40c" stroke="#ee7a00" stroke-width="1.1" stroke-linejoin="round"/><path d="M0.8 12.4 H10" stroke="#ee5a00" stroke-width="1.2"/></svg></div>
<div class="b" style="left:397.3px;top:72.3px;width:21.8px;height:17.4px;"></div>
<div class="i" style="left:401px;top:74.1px"><svg width="14" height="13.5" viewBox="0 0 14 13.5" style=""><path d="M5 3 H13 V12.6 H3.4 V8" fill="#ffc40c" stroke="#f29100" stroke-width="1.1"/><path d="M7.6 9.6 H11.6 M7.6 7.6 H11.6" stroke="#f29100" stroke-width="0.8"/><circle cx="4.2" cy="4.2" r="3.6" fill="#fff" stroke="#777" stroke-width="1.1"/><path d="M4.2 2 V4.4 L5.8 5.4" fill="none" stroke="#555" stroke-width="0.9"/></svg></div>
<div class="b" style="left:421.4px;top:72.3px;width:22.2px;height:17.4px;"></div>
<div class="i" style="left:424.6px;top:73.5px"><svg width="15.4" height="15" viewBox="0 0 15.4 15" style=""><path d="M4.8 0.8 H11.4 L14.6 4 V14 H4.8 Z" fill="#fff" stroke="#5a5a5a" stroke-width="1.1"/><path d="M11.4 0.8 V4 H14.6 Z" fill="#555" stroke="#555" stroke-width="0.8"/><path d="M9.6 4.4 Q5.4 2.4 3.4 6.2" fill="none" stroke="#1d46c0" stroke-width="2.1"/><path d="M0.4 5.4 L6.2 5.9 L2.5 9.8 Z" fill="#1d46c0"/><path d="M4.6 11.2 Q8.8 13.2 10.8 9.4" fill="none" stroke="#1d46c0" stroke-width="2.1"/><path d="M13.8 10.2 L8 9.7 L11.7 5.8 Z" fill="#1d46c0"/></svg></div>
<div style="left:447px;top:74.3px;width:1px;height:14px;background:#c4c4c4"></div>
<div class="b" style="left:452.8px;top:72.3px;width:22px;height:17.4px;"></div>
<div class="i" style="left:456.3px;top:73.7px"><svg width="15" height="14.5" viewBox="0 0 15 14.5" style=""><rect x="0.8" y="1.4" width="9.6" height="9.6" fill="#fff" stroke="#555" stroke-width="1.1"/><rect x="0.8" y="0.6" width="9.6" height="1.6" fill="#555"/><path d="M6.6 5 H11 L14 8 V13.6 H6.6 Z" fill="#fff" stroke="#1f6fb0" stroke-width="1.2"/><path d="M8.6 8 H10.4 V11.6 H12.6 V9.6" fill="#ffe27a" stroke="#ffc40c" stroke-width="0.8"/></svg></div>
<div style="left:478.3px;top:74.3px;width:1px;height:14px;background:#c4c4c4"></div>
<div class="b" style="left:483.8px;top:72.3px;width:31px;height:17.4px;"></div>
<div class="i" style="left:486px;top:74.7px"><svg width="15" height="12.6" viewBox="0 0 15 12.6" style=""><path d="M0.8 1.8 Q0.8 0.8 1.8 0.8 H6 L7.4 2.6 H13.4 Q14.2 2.6 14.2 3.4 V11.8 H0.8 Z" fill="#ffc40c" stroke="#f07a00" stroke-width="1.3"/></svg></div>
<div class="i" style="left:507px;top:81.8px"><svg width="4.2" height="4.2" viewBox="0 0 4.2 4.2" style=""><path d="M4.2 0 V4.2 H0 Z" fill="#222"/></svg></div>
<div style="left:518.3px;top:74.3px;width:1px;height:14px;background:#c4c4c4"></div>
<div class="b" style="left:523.6px;top:72.3px;width:21.8px;height:17.4px;"></div>
<div class="i" style="left:527.5px;top:75.5px"><svg width="14" height="12" viewBox="0 0 14 12" style=""><path d="M2.6 5.6 H11.4 L7 11 Z" fill="#9cc4e6" stroke="#1f6fb0" stroke-width="1.3" stroke-linejoin="round"/><path d="M1 1 H13 L7 6 Z" fill="#9cc4e6" stroke="#1f6fb0" stroke-width="1.3" stroke-linejoin="round"/></svg></div>
<div class="b" style="left:548px;top:72.3px;width:22px;height:17.4px;"></div>
<div class="i" style="left:552px;top:75.3px"><svg width="14" height="12" viewBox="0 0 14 12" style=""><path d="M2.6 6.4 H11.4 L7 1 Z" fill="#9cc4e6" stroke="#1f6fb0" stroke-width="1.3" stroke-linejoin="round"/><path d="M1 11 H13 L7 6 Z" fill="#9cc4e6" stroke="#1f6fb0" stroke-width="1.3" stroke-linejoin="round"/></svg></div>
<div style="left:574.3px;top:74.3px;width:1px;height:14px;background:#c4c4c4"></div>
<div class="b" style="left:579px;top:72.3px;width:22.2px;height:17.4px;"></div>
<div class="i" style="left:583.5px;top:74.1px"><svg width="13.4" height="13.6" viewBox="0 0 13.4 13.6" style=""><path d="M1 12.6 V5.4 L2.6 1.4 H5.2 L5.8 4.6 H7.6 L8.2 1.4 H10.8 L12.4 5.4 V12.6 H7.8 V8 H5.6 V12.6 Z" fill="#8fbfe6" stroke="#1f6fb0" stroke-width="1.3" stroke-linejoin="round"/></svg></div>
<div class="b" style="left:603.5px;top:72.3px;width:22.2px;height:17.4px;"></div>
<div class="i" style="left:607px;top:73.89999999999999px"><svg width="15" height="14.4" viewBox="0 0 15 14.4" style=""><path d="M1 12.6 V5.4 L2.6 1.4 H5.2 L5.8 4.6 H7.6 L8.2 1.4 H10.8 L12.4 5.4 V12.6 H7.8 V8 H5.6 V12.6 Z" fill="#8fbfe6" stroke="#1f6fb0" stroke-width="1.3" stroke-linejoin="round"/><circle cx="11" cy="10.4" r="3.4" fill="#1f6fb0"/><path d="M9 10.4 H13 M11 8.4 V12.4" stroke="#fff" stroke-width="1.3"/></svg></div>
<div style="left:629.3px;top:74.3px;width:1px;height:14px;background:#c4c4c4"></div>
<div class="b" style="left:635px;top:72.3px;width:22px;height:17.4px;"></div>
<div class="i" style="left:638.4px;top:73.89999999999999px"><svg width="14.6" height="13" viewBox="0 0 14.6 13" style=""><rect x="0.8" y="0.8" width="13" height="11.4" fill="#8fbfe6" stroke="#1f6fb0" stroke-width="1.5"/><path d="M4.4 3.4 L10.2 9.6 M10.2 3.4 L4.4 9.6" stroke="#fff" stroke-width="1.9"/></svg></div>
<div style="left:243.2px;top:93px;width:716px;height:3.2px;background:#cecece"></div>
<div style="left:243px;top:97.2px;width:251px;height:21.2px;background:#fbfbfb;border:1.6px solid #414a6a;box-sizing:border-box"></div>
<div style="left:246px;top:101.2px;width:39px;height:13.6px;background:#6f86c6"></div>
<div class="t" style="left:247px;top:102.5px;height:13.6px;line-height:13.6px;transform:scaleX(0.9170);font-size:11px;color:#fff">Browser</div>
<div style="left:286.2px;top:98.4px;width:1.3px;height:18.8px;background:#414a6a"></div>
<div class="i" style="left:288.6px;top:101.4px"><svg width="15.2" height="14" viewBox="0 0 15.2 14" style=""><path d="M6.6 7 V4.4 Q6.6 1 10 1 Q13.6 1 13.6 4.4 V6.6" fill="none" stroke="#333" stroke-width="1.6"/><rect x="0.8" y="6.6" width="10.2" height="6.6" rx="0.8" fill="#8c8fcc" stroke="#333" stroke-width="1.3"/></svg></div>
<div style="left:304.6px;top:98.4px;width:1.3px;height:18.8px;background:#414a6a"></div>
<div class="i" style="left:308.6px;top:101.6px"><svg width="13.4" height="13.4" viewBox="0 0 13.4 13.4" style=""><path d="M2.2 9.6 L9.6 1.6 L12 3.8 L4.6 11.8 Z" fill="#ffc40c" stroke="#8a5a00" stroke-width="0.9"/><path d="M9.6 1.6 L10.8 0.4 L13 2.6 L12 3.8 Z" fill="#d04a3a" stroke="#803020" stroke-width="0.7"/><path d="M2.2 9.6 L0.6 13 L4.6 11.8 Z" fill="#222"/></svg></div>
<div class="i" style="left:325.5px;top:102.8px"><svg width="27.6" height="10.6" viewBox="0 0 29 11" style=""><circle cx="5" cy="5.4" r="4.3" fill="#c4c8d2" stroke="#333" stroke-width="1.3"/><circle cx="14" cy="5.4" r="4.3" fill="#c4c8d2" stroke="#333" stroke-width="1.3"/><rect x="19" y="0.8" width="9" height="9.4" rx="2" fill="#0ce00c" stroke="#1a5a12" stroke-width="1.3"/></svg></div>
<div style="left:354.6px;top:98.4px;width:1.3px;height:18.8px;background:#414a6a"></div>
<div class="t" style="left:357.4px;top:99.3px;height:19.5px;line-height:19.5px;transform:scaleX(0.9535);font-size:11px;">P001/20200-1003</div>
<div style="left:444px;top:98.4px;width:1.3px;height:18.8px;background:#414a6a"></div>
<div class="t" style="left:446.4px;top:99.3px;height:19.5px;line-height:19.5px;transform:scaleX(0.9460);font-size:11px;">Version 1</div>
<div style="left:243.2px;top:122.6px;width:716px;height:3.8px;background:#cecece"></div>
<div class="b" style="left:244px;top:129.2px;width:30.8px;height:17.6px;"></div>
<div class="i" style="left:246.5px;top:131.4px"><svg width="14.6" height="13" viewBox="0 0 14.6 13" style=""><rect x="4.6" y="0.8" width="9.4" height="11.4" fill="#fff" stroke="#777" stroke-width="1"/><path d="M4.6 4.6 H14 M4.6 8.4 H14 M9.4 0.8 V12.2" stroke="#777" stroke-width="1"/><rect x="0.6" y="4" width="5" height="4.6" fill="#ffb40c" stroke="#ee6a00" stroke-width="1"/></svg></div>
<div style="left:264.2px;top:130.2px;width:1px;height:15.6px;background:#c8c8c8"></div>
<div class="i" style="left:267.6px;top:139px"><svg width="4.2" height="4.2" viewBox="0 0 4.2 4.2" style=""><path d="M4.2 0 V4.2 H0 Z" fill="#222"/></svg></div>
<div style="left:243.2px;top:148.6px;width:716px;height:1px;background:#d4d4d4"></div>
<div style="left:243.4px;top:151px;width:142px;height:101px;background:#e8ecf1"></div>
<div style="left:549.2px;top:151px;width:170.2px;height:101px;background:#e8ecf1"></div>
<div style="left:883.8px;top:151px;width:36.4px;height:101px;background:#e8ecf1"></div>
<div style="left:385.6px;top:151.2px;width:163.6px;height:16.5px;background:#cde2f1"></div>
<div class="t" style="left:264.2px;top:150.2px;height:16px;line-height:16px;transform:scaleX(0.8733);">Buchungskreis</div>
<div class="t" style="left:388px;top:150.2px;height:16px;line-height:16px;transform:scaleX(0.8515);">P001</div>
<div class="t" style="left:608px;top:150.2px;height:16px;line-height:16px;transform:scaleX(0.9306);">Wirtschaftseinheit</div>
<div class="t" style="left:721.6px;top:150.2px;height:16px;line-height:16px;transform:scaleX(0.8985);">20200</div>
<div class="t" style="left:264.2px;top:167.25px;height:16px;line-height:16px;transform:scaleX(0.8930);">Aktennummer</div>
<div class="t" style="left:388px;top:167.25px;height:16px;line-height:16px;transform:scaleX(0.9407);">P001/20200/1003</div>
<div class="t" style="left:608px;top:167.25px;height:16px;line-height:16px;transform:scaleX(0.9034);">Mieteinheit</div>
<div class="t" style="left:721.6px;top:167.25px;height:16px;line-height:16px;transform:scaleX(0.8938);">1003</div>
<div class="t" style="left:264.2px;top:184.3px;height:16px;line-height:16px;transform:scaleX(0.9292);">Anschrift Mietobjekt</div>
<div class="t" style="left:388px;top:184.3px;height:16px;line-height:16px;transform:scaleX(0.9156);">Senftenberger Ring 23b</div>
<div class="t" style="left:608px;top:184.3px;height:16px;line-height:16px;transform:scaleX(0.9206);">Nutzungsart</div>
<div class="t" style="left:721.6px;top:184.3px;height:16px;line-height:16px;transform:scaleX(0.9052);">Wohnung</div>
<div class="t" style="left:264.2px;top:201.35px;height:16px;line-height:16px;transform:scaleX(0.7390);">KKB</div>
<div class="t" style="left:388px;top:201.35px;height:16px;line-height:16px;transform:scaleX(0.9176);">Anne Winter</div>
<div class="t" style="left:608px;top:201.35px;height:16px;line-height:16px;transform:scaleX(0.8951);">Tel.</div>
<div class="t" style="left:721.6px;top:201.35px;height:16px;line-height:16px;transform:scaleX(0.9365);">030/ 4555678</div>
<div class="t" style="left:264.2px;top:218.4px;height:16px;line-height:16px;transform:scaleX(0.8367);">BEKO-MA</div>
<div class="t" style="left:388px;top:218.4px;height:16px;line-height:16px;transform:scaleX(0.9242);">Jeanette Elfstein</div>
<div class="t" style="left:608px;top:218.4px;height:16px;line-height:16px;transform:scaleX(0.8951);">Tel.</div>
<div class="t" style="left:721.6px;top:218.4px;height:16px;line-height:16px;transform:scaleX(0.9365);">030/ 4555670</div>
<div class="t" style="left:264.2px;top:235.45px;height:16px;line-height:16px;transform:scaleX(0.7866);">HM</div>
<div class="t" style="left:388px;top:235.45px;height:16px;line-height:16px;transform:scaleX(0.9002);">Dieter Cleber</div>
<div class="t" style="left:608px;top:235.45px;height:16px;line-height:16px;transform:scaleX(0.8951);">Tel.</div>
<div class="t" style="left:721.6px;top:235.45px;height:16px;line-height:16px;transform:scaleX(0.9365);">030/ 4555671</div>
<div style="left:243.2px;top:328.3px;width:716px;height:4.3px;background:#cecece"></div>
<div style="left:243.5px;top:332.8px;width:715.5px;height:306.2px;background:#fff"></div>
<div style="left:243.5px;top:332.8px;width:638.2px;height:16.8px;background:#e3e3e3"></div>
<div style="left:881.7px;top:332.8px;width:77.3px;height:16.8px;background:#ebebeb"></div>
<div style="left:243.5px;top:349.4px;width:715.5px;height:0.8px;background:#d6d6d6"></div>
<div style="left:477.6px;top:333.4px;width:1px;height:15.6px;background:#f4f4f4"></div>
<div style="left:478.6px;top:333.4px;width:1px;height:15.6px;background:#cfcfcf"></div>
<div style="left:611px;top:333.4px;width:1px;height:15.6px;background:#f4f4f4"></div>
<div style="left:612px;top:333.4px;width:1px;height:15.6px;background:#cfcfcf"></div>
<div style="left:702px;top:333.4px;width:1px;height:15.6px;background:#f4f4f4"></div>
<div style="left:703px;top:333.4px;width:1px;height:15.6px;background:#cfcfcf"></div>
<div style="left:836.6px;top:333.4px;width:1px;height:15.6px;background:#f4f4f4"></div>
<div style="left:837.6px;top:333.4px;width:1px;height:15.6px;background:#cfcfcf"></div>
<div style="left:881.4px;top:333.4px;width:1px;height:15.6px;background:#f4f4f4"></div>
<div style="left:882.4px;top:333.4px;width:1px;height:15.6px;background:#cfcfcf"></div>
<div class="t" style="left:248.6px;top:334.0px;height:16.8px;line-height:16.8px;transform:scaleX(0.8841);">Hierarchie</div>
<div class="t" style="left:484.4px;top:334.0px;height:16.8px;line-height:16.8px;transform:scaleX(0.9034);">Elementart</div>
<div class="t" style="left:618.6px;top:334.0px;height:16.8px;line-height:16.8px;transform:scaleX(0.9012);">Sichtbarkeit</div>
<div class="t" style="left:708.6px;top:334.0px;height:16.8px;line-height:16.8px;transform:scaleX(0.9152);">Letzte Bearbeitung</div>
<div class="t" style="left:843.4px;top:334.0px;height:16.8px;line-height:16.8px;transform:scaleX(0.8587);">Kno...</div>
<div style="left:478px;top:349.6px;width:1.2px;height:290px;background:#5a5a5a"></div>
<div class="i" style="left:248.7px;top:353.70000000000005px"><svg width="9" height="6" viewBox="0 0 9 6" style=""><path d="M1.2 0.9 L4.5 4 L7.8 0.9" fill="none" stroke="#505050" stroke-width="1.8"/></svg></div>
<div class="i" style="left:262.8px;top:351.40000000000003px"><svg width="15" height="13" viewBox="0 0 15 13" style=""><path d="M7.1 12.3 L7.6 7.6 L10.9 0.8 L14.5 0.2 L14.5 9.8 L12.6 12.5 Z" fill="#58b42c" stroke="#3a8c1c" stroke-width="0.9" stroke-linejoin="round"/><path d="M12.6 12.5 L12.6 2.6 L14.5 0.2 L14.5 9.8 Z" fill="#3a9420"/><path d="M10.9 0.8 L12.6 2.6 L12.6 12.5" fill="none" stroke="#8ed860" stroke-width="0.7"/><rect x="9.6" y="8.8" width="1.5" height="1.7" fill="#1f5d12"/><path d="M0.6 2 H10.6 L6.4 7.6 L1.8 11.4 L0.6 10.2 L4.2 6.4 Z" fill="#2f83c2" stroke="#1f6fb0" stroke-width="0.8" stroke-linejoin="round"/><path d="M2.6 3.9 H8.4 M4 5.7 H7" stroke="#9fd0f0" stroke-width="0.8"/></svg></div>
<div class="t" style="left:281.5px;top:351.1px;height:16.15px;line-height:16.15px;transform:scaleX(0.9343);">P001/20200-1003</div>
<div class="t" style="left:704px;top:351.1px;height:16.17px;line-height:16.17px;transform:scaleX(0.8661);">SSCHOENROCK / 23.11....</div>
<div class="i" style="left:268.7px;top:369.67px"><svg width="6" height="9" viewBox="0 0 6 9" style=""><path d="M0.9 1.2 L4 4.5 L0.9 7.8" fill="none" stroke="#505050" stroke-width="1.8"/></svg></div>
<div class="i" style="left:281.2px;top:369.07000000000005px"><svg width="14.5" height="11" viewBox="0 0 14.5 11" style=""><path d="M0.7 1.8 Q0.7 0.7 1.8 0.7 H5.4 L6.6 2.2 H13 Q13.8 2.2 13.8 3 V10.2 H0.7 Z" fill="#ffc40c" stroke="#f08a00" stroke-width="1.2"/><path d="M1.6 3.3 H12.8" stroke="#ffdc5e" stroke-width="0.9"/></svg></div>
<div class="t" style="left:299.5px;top:367.27px;height:16.15px;line-height:16.15px;transform:scaleX(0.9506);">Arbeitsvorrat</div>
<div class="t" style="left:614.2px;top:367.27px;height:16.17px;line-height:16.17px;transform:scaleX(0.8604);">Alle Rollen</div>
<div class="t" style="left:839.6px;top:367.27px;height:16.17px;line-height:16.17px;transform:scaleX(0.8236);">1</div>
<div class="i" style="left:268.7px;top:385.84000000000003px"><svg width="6" height="9" viewBox="0 0 6 9" style=""><path d="M0.9 1.2 L4 4.5 L0.9 7.8" fill="none" stroke="#505050" stroke-width="1.8"/></svg></div>
<div class="i" style="left:281.2px;top:385.24000000000007px"><svg width="14.5" height="11" viewBox="0 0 14.5 11" style=""><path d="M0.7 1.8 Q0.7 0.7 1.8 0.7 H5.4 L6.6 2.2 H13 Q13.8 2.2 13.8 3 V10.2 H0.7 Z" fill="#ffc40c" stroke="#f08a00" stroke-width="1.2"/><path d="M1.6 3.3 H12.8" stroke="#ffdc5e" stroke-width="0.9"/></svg></div>
<div class="t" style="left:299.5px;top:383.44px;height:16.15px;line-height:16.15px;transform:scaleX(0.8693);">Umfeld</div>
<div class="t" style="left:614.2px;top:383.44px;height:16.17px;line-height:16.17px;transform:scaleX(0.8604);">Alle Rollen</div>
<div class="t" style="left:839.6px;top:383.44px;height:16.17px;line-height:16.17px;transform:scaleX(0.8236);">3</div>
<div style="left:269.8px;top:405.61px;width:2.8px;height:2.8px;background:#606060;border-radius:0.9px"></div>
<div class="i" style="left:281.2px;top:401.41px"><svg width="14.5" height="11" viewBox="0 0 14.5 11" style=""><path d="M0.7 1.8 Q0.7 0.7 1.8 0.7 H5.4 L6.6 2.2 H13 Q13.8 2.2 13.8 3 V10.2 H0.7 Z" fill="#ffc40c" stroke="#f08a00" stroke-width="1.2"/><path d="M1.6 3.3 H12.8" stroke="#ffdc5e" stroke-width="0.9"/></svg></div>
<div class="t" style="left:299.5px;top:399.61px;height:16.15px;line-height:16.15px;transform:scaleX(0.8914);">Ausgang</div>
<div class="t" style="left:614.2px;top:399.61px;height:16.17px;line-height:16.17px;transform:scaleX(0.8604);">Alle Rollen</div>
<div class="t" style="left:839.6px;top:399.61px;height:16.17px;line-height:16.17px;transform:scaleX(0.8236);">4</div>
<div class="i" style="left:266.7px;top:418.38000000000005px"><svg width="9" height="6" viewBox="0 0 9 6" style=""><path d="M1.2 0.9 L4.5 4 L7.8 0.9" fill="none" stroke="#505050" stroke-width="1.8"/></svg></div>
<div class="i" style="left:281.2px;top:417.58000000000004px"><svg width="14.5" height="11" viewBox="0 0 14.5 11" style=""><path d="M0.7 10.2 V1.5 Q0.7 0.7 1.5 0.7 H4.6 L5.8 2.2 H11 V4" fill="#ffc40c" stroke="#ee6a00" stroke-width="1.2"/><path d="M0.7 10.4 L2.6 4.1 H13.6 L11.8 10.4 Z" fill="#ffc40c" stroke="#ee6a00" stroke-width="1.2" stroke-linejoin="round"/></svg></div>
<div class="t" style="left:299.5px;top:415.78px;height:16.15px;line-height:16.15px;transform:scaleX(0.9089);">Akte</div>
<div class="t" style="left:614.2px;top:415.78px;height:16.17px;line-height:16.17px;transform:scaleX(0.8604);">Alle Rollen</div>
<div class="t" style="left:839.6px;top:415.78px;height:16.17px;line-height:16.17px;transform:scaleX(0.8236);">5</div>
<div style="left:287.8px;top:437.95000000000005px;width:2.8px;height:2.8px;background:#606060;border-radius:0.9px"></div>
<div class="i" style="left:299.2px;top:433.75000000000006px"><svg width="14.5" height="11" viewBox="0 0 14.5 11" style=""><path d="M0.7 1.8 Q0.7 0.7 1.8 0.7 H5.4 L6.6 2.2 H13 Q13.8 2.2 13.8 3 V10.2 H0.7 Z" fill="#ffc40c" stroke="#f08a00" stroke-width="1.2"/><path d="M1.6 3.3 H12.8" stroke="#ffdc5e" stroke-width="0.9"/></svg></div>
<div class="t" style="left:317.5px;top:431.95px;height:16.15px;line-height:16.15px;transform:scaleX(0.8864);">Belegungsbindung</div>
<div class="t" style="left:614.2px;top:431.95px;height:16.17px;line-height:16.17px;transform:scaleX(0.8604);">Alle Rollen</div>
<div class="t" style="left:839.6px;top:431.95px;height:16.17px;line-height:16.17px;transform:scaleX(0.8704);">13</div>
<div style="left:287.8px;top:454.12px;width:2.8px;height:2.8px;background:#606060;border-radius:0.9px"></div>
<div class="i" style="left:299.2px;top:449.92px"><svg width="14.5" height="11" viewBox="0 0 14.5 11" style=""><path d="M0.7 1.8 Q0.7 0.7 1.8 0.7 H5.4 L6.6 2.2 H13 Q13.8 2.2 13.8 3 V10.2 H0.7 Z" fill="#ffc40c" stroke="#f08a00" stroke-width="1.2"/><path d="M1.6 3.3 H12.8" stroke="#ffdc5e" stroke-width="0.9"/></svg></div>
<div class="t" style="left:317.5px;top:448.12px;height:16.15px;line-height:16.15px;transform:scaleX(0.9379);">Instandhaltung</div>
<div class="t" style="left:614.2px;top:448.12px;height:16.17px;line-height:16.17px;transform:scaleX(0.8604);">Alle Rollen</div>
<div class="t" style="left:839.6px;top:448.12px;height:16.17px;line-height:16.17px;transform:scaleX(0.8704);">12</div>
<div style="left:287.8px;top:470.29px;width:2.8px;height:2.8px;background:#606060;border-radius:0.9px"></div>
<div class="i" style="left:299.2px;top:466.09000000000003px"><svg width="14.5" height="11" viewBox="0 0 14.5 11" style=""><path d="M0.7 1.8 Q0.7 0.7 1.8 0.7 H5.4 L6.6 2.2 H13 Q13.8 2.2 13.8 3 V10.2 H0.7 Z" fill="#ffc40c" stroke="#f08a00" stroke-width="1.2"/><path d="M1.6 3.3 H12.8" stroke="#ffdc5e" stroke-width="0.9"/></svg></div>
<div class="t" style="left:317.5px;top:464.29px;height:16.15px;line-height:16.15px;transform:scaleX(0.9077);">Instandhaltung SAP</div>
<div class="t" style="left:614.2px;top:464.29px;height:16.17px;line-height:16.17px;transform:scaleX(0.8604);">Alle Rollen</div>
<div class="t" style="left:839.6px;top:464.29px;height:16.17px;line-height:16.17px;transform:scaleX(0.8704);">14</div>
<div style="left:287.8px;top:486.46000000000004px;width:2.8px;height:2.8px;background:#606060;border-radius:0.9px"></div>
<div class="i" style="left:299.2px;top:482.26000000000005px"><svg width="14.5" height="11" viewBox="0 0 14.5 11" style=""><path d="M0.7 1.8 Q0.7 0.7 1.8 0.7 H5.4 L6.6 2.2 H13 Q13.8 2.2 13.8 3 V10.2 H0.7 Z" fill="#ffc40c" stroke="#f08a00" stroke-width="1.2"/><path d="M1.6 3.3 H12.8" stroke="#ffdc5e" stroke-width="0.9"/></svg></div>
<div class="t" style="left:317.5px;top:480.46px;height:16.15px;line-height:16.15px;transform:scaleX(0.9170);">Instandsetzung/ Modernisierung</div>
<div class="t" style="left:614.2px;top:480.46px;height:16.17px;line-height:16.17px;transform:scaleX(0.8604);">Alle Rollen</div>
<div class="t" style="left:839.6px;top:480.46px;height:16.17px;line-height:16.17px;transform:scaleX(0.8704);">15</div>
<div style="left:287.8px;top:502.63000000000005px;width:2.8px;height:2.8px;background:#606060;border-radius:0.9px"></div>
<div class="i" style="left:299.2px;top:498.43000000000006px"><svg width="14.5" height="11" viewBox="0 0 14.5 11" style=""><path d="M0.7 1.8 Q0.7 0.7 1.8 0.7 H5.4 L6.6 2.2 H13 Q13.8 2.2 13.8 3 V10.2 H0.7 Z" fill="#ffc40c" stroke="#f08a00" stroke-width="1.2"/><path d="M1.6 3.3 H12.8" stroke="#ffdc5e" stroke-width="0.9"/></svg></div>
<div class="t" style="left:317.5px;top:496.63px;height:16.15px;line-height:16.15px;transform:scaleX(0.9471);">Interessentenverwaltung</div>
<div class="t" style="left:614.2px;top:496.63px;height:16.17px;line-height:16.17px;transform:scaleX(0.8604);">Alle Rollen</div>
<div class="t" style="left:839.6px;top:496.63px;height:16.17px;line-height:16.17px;transform:scaleX(0.8704);">16</div>
<div style="left:287.8px;top:518.8000000000001px;width:2.8px;height:2.8px;background:#606060;border-radius:0.9px"></div>
<div class="i" style="left:299.2px;top:514.6px"><svg width="14.5" height="11" viewBox="0 0 14.5 11" style=""><path d="M0.7 1.8 Q0.7 0.7 1.8 0.7 H5.4 L6.6 2.2 H13 Q13.8 2.2 13.8 3 V10.2 H0.7 Z" fill="#ffc40c" stroke="#f08a00" stroke-width="1.2"/><path d="M1.6 3.3 H12.8" stroke="#ffdc5e" stroke-width="0.9"/></svg></div>
<div class="t" style="left:317.5px;top:512.8px;height:16.15px;line-height:16.15px;transform:scaleX(0.9326);">Justitiariat</div>
<div class="t" style="left:614.2px;top:512.8px;height:16.17px;line-height:16.17px;transform:scaleX(0.8604);">Alle Rollen</div>
<div class="t" style="left:839.6px;top:512.8px;height:16.17px;line-height:16.17px;transform:scaleX(0.8704);">17</div>
<div style="left:287.8px;top:534.97px;width:2.8px;height:2.8px;background:#606060;border-radius:0.9px"></div>
<div class="i" style="left:299.2px;top:530.77px"><svg width="14.5" height="11" viewBox="0 0 14.5 11" style=""><path d="M0.7 1.8 Q0.7 0.7 1.8 0.7 H5.4 L6.6 2.2 H13 Q13.8 2.2 13.8 3 V10.2 H0.7 Z" fill="#ffc40c" stroke="#f08a00" stroke-width="1.2"/><path d="M1.6 3.3 H12.8" stroke="#ffdc5e" stroke-width="0.9"/></svg></div>
<div class="t" style="left:317.5px;top:528.97px;height:16.15px;line-height:16.15px;transform:scaleX(0.8977);">Unterlagen Allgemein</div>
<div class="t" style="left:614.2px;top:528.97px;height:16.17px;line-height:16.17px;transform:scaleX(0.8604);">Alle Rollen</div>
<div class="t" style="left:839.6px;top:528.97px;height:16.17px;line-height:16.17px;transform:scaleX(0.8704);">18</div>
<div style="left:287.8px;top:551.1400000000001px;width:2.8px;height:2.8px;background:#606060;border-radius:0.9px"></div>
<div class="i" style="left:299.2px;top:546.94px"><svg width="14.5" height="11" viewBox="0 0 14.5 11" style=""><path d="M0.7 1.8 Q0.7 0.7 1.8 0.7 H5.4 L6.6 2.2 H13 Q13.8 2.2 13.8 3 V10.2 H0.7 Z" fill="#ffc40c" stroke="#f08a00" stroke-width="1.2"/><path d="M1.6 3.3 H12.8" stroke="#ffdc5e" stroke-width="0.9"/></svg></div>
<div class="t" style="left:317.5px;top:545.14px;height:16.15px;line-height:16.15px;transform:scaleX(0.8941);">Versicherung</div>
<div class="t" style="left:614.2px;top:545.14px;height:16.17px;line-height:16.17px;transform:scaleX(0.8604);">Alle Rollen</div>
<div class="t" style="left:839.6px;top:545.14px;height:16.17px;line-height:16.17px;transform:scaleX(0.8704);">19</div>
<div class="i" style="left:268.7px;top:563.71px"><svg width="6" height="9" viewBox="0 0 6 9" style=""><path d="M0.9 1.2 L4 4.5 L0.9 7.8" fill="none" stroke="#505050" stroke-width="1.8"/></svg></div>
<div class="i" style="left:281.2px;top:563.11px"><svg width="14.5" height="11" viewBox="0 0 14.5 11" style=""><path d="M0.7 1.8 Q0.7 0.7 1.8 0.7 H5.4 L6.6 2.2 H13 Q13.8 2.2 13.8 3 V10.2 H0.7 Z" fill="#ffc40c" stroke="#f08a00" stroke-width="1.2"/><path d="M1.6 3.3 H12.8" stroke="#ffdc5e" stroke-width="0.9"/></svg></div>
<div class="t" style="left:299.5px;top:561.31px;height:16.15px;line-height:16.15px;transform:scaleX(0.9347);">Mietvertragsakten</div>
<div class="t" style="left:614.2px;top:561.31px;height:16.17px;line-height:16.17px;transform:scaleX(0.8604);">Alle Rollen</div>
<div class="t" style="left:839.6px;top:561.31px;height:16.17px;line-height:16.17px;transform:scaleX(0.8236);">6</div>
<div style="left:261.2px;top:350.2px;width:620.6px;height:1.1px;background:repeating-linear-gradient(90deg,#111 0 2px,transparent 2px 4px)"></div>
<div style="left:261.2px;top:364.7px;width:620.6px;height:1.1px;background:repeating-linear-gradient(90deg,#111 0 2px,transparent 2px 4px)"></div>
<div style="left:880.7px;top:350.2px;width:1.1px;height:15.6px;background:repeating-linear-gradient(180deg,#111 0 2px,transparent 2px 4px)"></div>
<div style="left:261.1px;top:350.1px;width:1.3px;height:15.8px;background:#f01818"></div>
<div style="left:261.1px;top:350.1px;width:5.6px;height:1.3px;background:#f01818"></div>
<div style="left:261.1px;top:364.6px;width:5.6px;height:1.3px;background:#f01818"></div>
<div style="left:880.6px;top:350.1px;width:1.3px;height:4.6px;background:#f01818"></div>
<div style="left:880.6px;top:361.3px;width:1.3px;height:4.6px;background:#f01818"></div>
<div style="left:877.4px;top:350.1px;width:4.4px;height:1.3px;background:#f01818"></div>
<div style="left:877.4px;top:364.6px;width:4.4px;height:1.3px;background:#f01818"></div>
</div></body></html>
